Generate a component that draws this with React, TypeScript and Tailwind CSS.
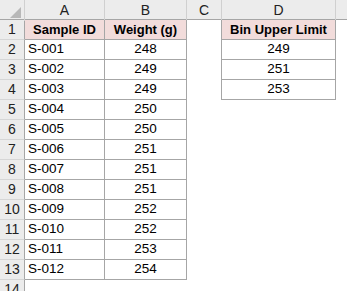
const rows: [string, number][] = [
  ["S-001", 248],
  ["S-002", 249],
  ["S-003", 249],
  ["S-004", 250],
  ["S-005", 250],
  ["S-006", 251],
  ["S-007", 251],
  ["S-008", 251],
  ["S-009", 252],
  ["S-010", 252],
  ["S-011", 253],
  ["S-012", 254],
];

const bins = [249, 251, 253];

const cols = "grid grid-cols-[25px_80px_82px_35px_114px_40px]";

function RowHead({ n }: { n: number }) {
  return (
    <div className="h-[20px] bg-[#ececec] border-r border-r-[#a6a6a6] border-b border-b-[#d6d6d6] flex items-center justify-center text-[14px] text-[#222]">
      {n}
    </div>
  );
}

export default function App() {
  return (
    <div
      className="w-[347px] h-[291px] overflow-hidden bg-white text-[13.5px] text-black"
      style={{ fontFamily: "'Liberation Sans', Arial, sans-serif" }}
    >
      {/* Column headers */}
      <div className={`${cols} h-[20px] bg-[#ececec] border-b border-b-[#a6a6a6] text-[14px] text-[#222]`}>
        <div className="relative border-r border-r-[#d0d0d0]">
          <svg className="absolute right-[3px] bottom-[3px]" width="11" height="11" viewBox="0 0 11 11">
            <polygon points="11,0 11,11 0,11" fill="#b8b8b8" />
          </svg>
        </div>
        <div className="border-r border-r-[#d0d0d0] flex items-center justify-center">A</div>
        <div className="border-r border-r-[#d0d0d0] flex items-center justify-center">B</div>
        <div className="border-r border-r-[#d0d0d0] flex items-center justify-center">C</div>
        <div className="border-r border-r-[#d0d0d0] flex items-center justify-center">D</div>
        <div />
      </div>

      {/* Row 1: headers */}
      <div className={cols}>
        <RowHead n={1} />
        <div className="h-[20px] bg-[#f2dcdb] border-r border-b border-[#a6a6a6] flex items-center justify-center font-bold text-[13px]">
          Sample ID
        </div>
        <div className="h-[20px] bg-[#f2dcdb] border-r border-b border-[#a6a6a6] flex items-center justify-center font-bold text-[13px]">
          Weight (g)
        </div>
        <div className="h-[20px] border-r border-[#a6a6a6]" />
        <div className="h-[20px] bg-[#f2dcdb] border-r border-b border-[#a6a6a6] flex items-center justify-center font-bold text-[13px]">
          Bin Upper Limit
        </div>
        <div />
      </div>

      {rows.map(([id, w], i) => {
        const bin = bins[i];
        return (
          <div key={id} className={cols}>
            <RowHead n={i + 2} />
            <div className="h-[20px] border-r border-b border-[#a6a6a6] flex items-center pl-[3px]">{id}</div>
            <div className="h-[20px] border-r border-b border-[#a6a6a6] flex items-center justify-center">{w}</div>
            <div className={bin ? "h-[20px] border-r border-[#a6a6a6]" : "h-[20px]"} />
            {bin ? (
              <div className="h-[20px] border-r border-b border-[#a6a6a6] flex items-center justify-center">{bin}</div>
            ) : (
              <div />
            )}
            <div />
          </div>
        );
      })}

      <div className={cols}>
        <RowHead n={14} />
      </div>
    </div>
  );
}
